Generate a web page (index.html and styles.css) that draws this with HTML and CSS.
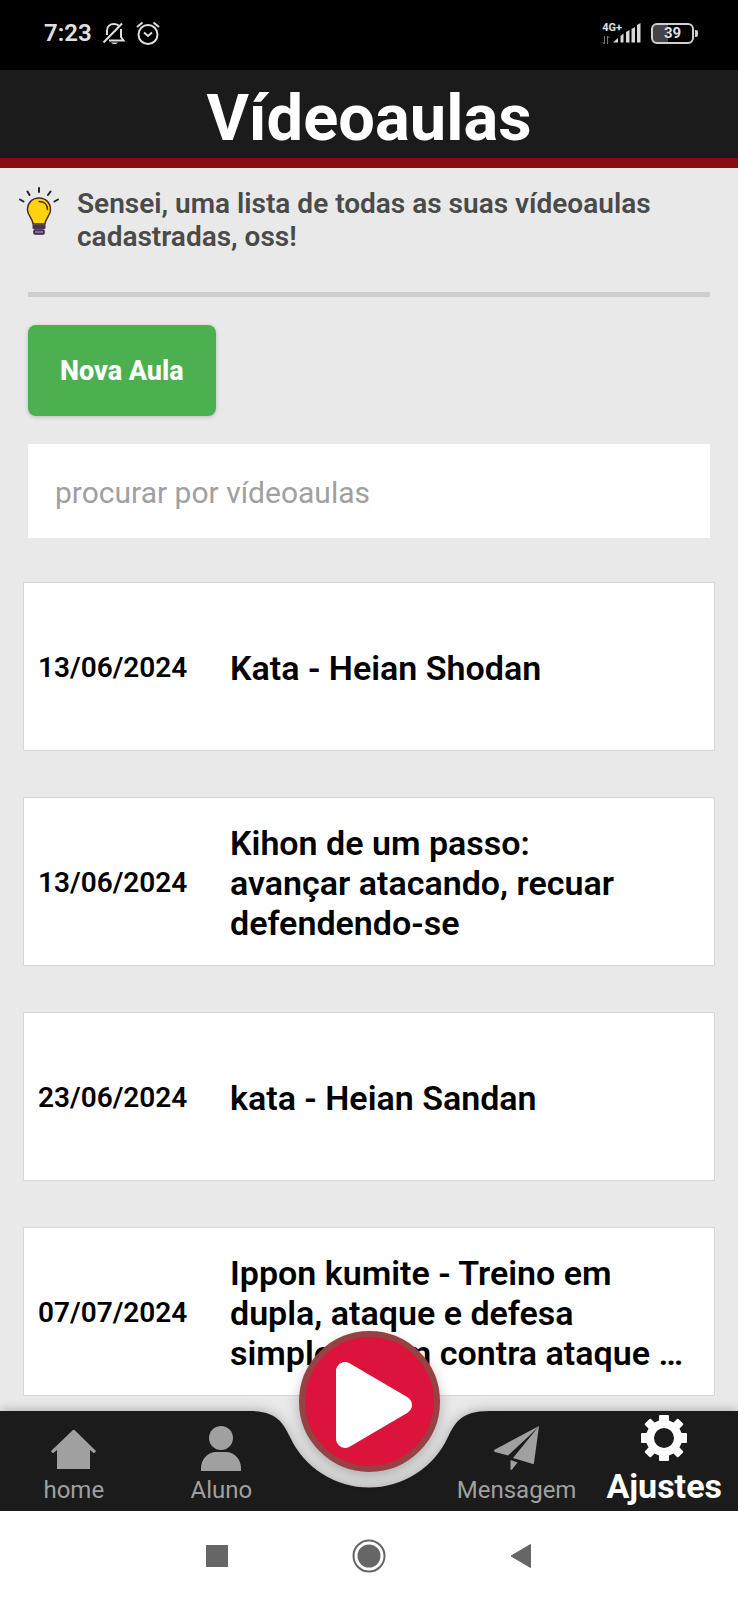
FILE: index.html
```html
<!DOCTYPE html>
<html lang="pt-BR">
<head>
<meta charset="utf-8">
<meta name="viewport" content="width=device-width, initial-scale=1">
<title>Vídeoaulas</title>
<link rel="stylesheet" href="styles.css">
</head>
<body>
<div class="screen">
  <div class="status">
    <span class="status-time">7:23</span>
    <svg class="status-icon" viewBox="0 0 24 24" width="24" height="24" fill="none" stroke="currentColor" stroke-width="2">
      <path d="M5 14V9.500C5 5.500 8 3 12 3c1.800 0 3.300.5 4.500 1.500M19 8v8l2.500 3.500H7M1.500 21.500L20 2.500"/>
      <path d="M9 21.500h7l-2 1.500h-3z" fill="currentColor" stroke="none"/>
    </svg>
    <svg class="status-icon" viewBox="0 0 24 24" width="24" height="24" fill="none" stroke="currentColor" stroke-width="2">
      <circle cx="12" cy="13.500" r="9.500"/>
      <path d="M8 11.500l4 3.500 4-3.500M1 6l5.500-4.500M23 6l-5.500-4.500"/>
    </svg>
    <span class="status-gap"></span>
    <span class="network">
      <span class="network-type">4G+</span>
      <svg viewBox="0 0 8 10" width="8" height="10" fill="none" stroke="#777"><path d="M2.500 1v8L.5 7M5.500 9V1l2 2"/></svg>
    </span>
    <svg class="bars" viewBox="0 0 28 20" width="28" height="20" fill="#d8d8d8">
      <path d="M0 19.500L5 15v4.500zM7.500 13l3-2.500v9h-3zM13 9l3.500-2v12.500H13zM18.500 6L22 4v15.500h-3.500zM24 2l3.500-2v19.500H24z"/>
    </svg>
    <span class="battery"><span class="battery-level">39</span></span>
  </div>

  <header class="header"><h1 class="header-title">Vídeoaulas</h1></header>

  <main class="content">
    <div class="tip">
      <svg class="tip-icon" viewBox="0 0 40 50" width="40" height="50">
        <g stroke="#2b2138" stroke-width="2" stroke-linecap="round" fill="none">
          <path d="M20 1v4M8.500 4.500l2 3.500M31.500 4.500l-2.500 3.500M1 12.500l3.500 2M39 12.500L35.500 14.500"/>
        </g>
        <path d="M20 11C13 11 8.500 16 8.500 23c0 5.500 5 8 5.500 14h12c.5-6 5.500-8.500 5.500-14C31.500 16 27 11 20 11z" fill="#ffd20f" stroke="#4b2b2b" stroke-width="1.500"/>
        <path d="M20 14.500c5 0 8.500 3 8.500 8" fill="none" stroke="#4b2b1b" stroke-width="1.500" stroke-linecap="round"/>
        <rect x="13.500" y="37.500" width="13" height="4.500" rx="1" fill="#4a3350"/>
        <rect x="15" y="43" width="10" height="4" rx="1" fill="#8a6b95" stroke="#33213c" stroke-width="1.500"/>
      </svg>
      <p class="tip-text">Sensei, uma lista de todas as suas vídeoaulas cadastradas, oss!</p>
    </div>
    <hr class="divider">
    <button class="new-button" type="button">Nova Aula</button>
    <input class="search" type="search" placeholder="procurar por vídeoaulas" aria-label="procurar por vídeoaulas">

    <ul class="lessons">
      <li class="lesson"><time class="lesson-date" datetime="2024-06-13">13/06/2024</time><span class="lesson-title">Kata - Heian Shodan</span></li>
      <li class="lesson"><time class="lesson-date" datetime="2024-06-13">13/06/2024</time><span class="lesson-title">Kihon de um passo:<br>avançar atacando, recuar defendendo-se</span></li>
      <li class="lesson"><time class="lesson-date" datetime="2024-06-23">23/06/2024</time><span class="lesson-title">kata - Heian Sandan</span></li>
      <li class="lesson"><time class="lesson-date" datetime="2024-07-07">07/07/2024</time><span class="lesson-title">Ippon kumite - Treino em dupla, ataque e defesa simples, sem contra ataque …</span></li>
    </ul>
  </main>

  <nav class="tabs">
    <div class="tabs-shape">
      <span class="tabs-side"></span>
      <svg class="tabs-notch" viewBox="0 0 240 100" width="240" height="100"><path d="M0 0C28 0 34 12 41 26A87 87 0 0 0 199 26C206 12 212 0 240 0V100H0z" fill="#1b1b1b"/></svg>
      <span class="tabs-side"></span>
    </div>
    <a class="tab" href="#home">
      <svg viewBox="0 0 46 46" width="46" height="46" fill="currentColor"><path d="M22 5L0 26q.5 2 2.500 2L6 25v19h33V25l3.500 3q2 0 2.500-2L23.500 5q-.8-.7-1.500 0z"/></svg>
      <span class="tab-label">home</span>
    </a>
    <a class="tab" href="#aluno">
      <svg viewBox="0 0 46 46" width="46" height="46" fill="currentColor"><circle cx="23" cy="13" r="12"/><path d="M3 46v-3c0-9 7-16 15-16h10c8 0 15 7 15 16v3z"/></svg>
      <span class="tab-label">Aluno</span>
    </a>
    <span class="tab-space"></span>
    <a class="tab" href="#mensagem">
      <svg viewBox="0 0 46 46" width="46" height="46" fill="currentColor"><path d="M45 1L0 25q0 1.500 1 2l13 3.500L35 11zM45 1L19 33l20 6q1 0 1-1zM16.500 35l7 2.500L18 44.500q-1.500 1-1.500-.5z"/></svg>
      <span class="tab-label">Mensagem</span>
    </a>
    <a class="tab tab-active" href="#ajustes" aria-current="page">
      <svg viewBox="0 0 46 46" width="46" height="46" fill="currentColor" fill-rule="evenodd"><path d="M19 0h8q1 0 1 1v4.500l4.500 2L36 4q.8-.7 1.500 0L42 8.500q.7.8 0 1.500l-3.500 3.500 2 4.500H45q1 0 1 1v8q0 1-1 1h-4.500l-2 4.500L42 36q.7.8 0 1.500L37.500 42q-.8.7-1.500 0l-3.500-3.500-4.500 2V45q0 1-1 1h-8q-1 0-1-1v-4.500l-4.500-2L10 42q-.8.7-1.500 0L4 37.500q-.7-.8 0-1.500l3.500-3.500-2-4.500H1q-1 0-1-1v-8q0-1 1-1h4.500l2-4.500L4 10q-.7-.8 0-1.500L8.500 4q.8-.7 1.500 0l3.500 3.500 4.500-2V1q0-1 1-1zM23 13a10 10 0 1 0 0 20a10 10 0 1 0 0-20z"/></svg>
      <span class="tab-label">Ajustes</span>
    </a>
    <button class="play" type="button" aria-label="Reproduzir">
      <svg viewBox="0 0 78 88" width="78" height="88"><path d="M10 10v68L68 44z" fill="#fff" stroke="#fff" stroke-width="18" stroke-linejoin="round"/></svg>
    </button>
  </nav>

  <div class="system">
    <svg viewBox="0 0 22 22" width="22" height="22"><path d="M0 0h22v22H0z" fill="#666"/></svg>
    <svg viewBox="0 0 34 34" width="34" height="34"><circle cx="17" cy="17" r="15.500" fill="none" stroke="#666" stroke-width="2"/><circle cx="17" cy="17" r="11.500" fill="#666"/></svg>
    <svg viewBox="0 0 22 26" width="22" height="26"><path d="M1 13L20.500 1.500v23z" fill="#666" stroke="#666" stroke-linejoin="round"/></svg>
  </div>
</div>
</body>
</html>
```
FILE: styles.css
```css
* { box-sizing: border-box; }

body {
  margin: 0;
  font-family: Roboto, "Noto Sans", sans-serif;
  background: #e9e9e9;
}

.screen {
  display: flex;
  flex-direction: column;
  height: 100vh;
  overflow: hidden;
}

/* Status bar */
.status {
  flex: none;
  display: flex;
  align-items: center;
  gap: 10px;
  height: 70px;
  padding: 0 40px 4px 44px;
  background: #000;
  color: #e0e0e0;
}
.status-time { font-size: 24px; font-weight: 600; }
.status-gap { flex: 1; }
.network {
  display: flex;
  flex-direction: column;
  gap: 2px;
  margin-right: -19px;
}
.network-type { font-size: 11px; font-weight: 700; line-height: 11px; }
.battery {
  position: relative;
  display: flex;
  align-items: center;
  justify-content: center;
  width: 43px;
  height: 21px;
  margin-right: 4px;
  border: 2px solid #d0d0d0;
  border-radius: 6px;
  background: linear-gradient(90deg, #444 39%, #000 39%);
}
.battery::after {
  content: "";
  position: absolute;
  right: -6px;
  top: 5px;
  width: 3px;
  height: 7px;
  border-radius: 0 2px 2px 0;
  background: #d0d0d0;
}
.battery-level { font-size: 15px; font-weight: 700; line-height: 16px; }

/* Header */
.header {
  flex: none;
  padding-top: 8px;
  background: #1b1b1b;
  border-bottom: 10px solid #850c10;
}
.header-title {
  margin: 0;
  color: #fff;
  font-size: 65px;
  font-weight: 700;
  line-height: 80px;
  text-align: center;
}

/* Content */
.content {
  flex: 1;
  min-height: 0;
  display: flex;
  flex-direction: column;
  padding: 0 28px;
}
.tip {
  display: flex;
  align-items: flex-start;
  gap: 18px;
  margin: 19px 0 39px -9px;
}
.tip-icon { flex: none; }
.tip-text {
  margin: 0;
  color: #4a4a4a;
  font-size: 28px;
  font-weight: 600;
  line-height: 33px;
}
.divider {
  flex: none;
  width: 100%;
  height: 5px;
  margin: 0 0 28px;
  border: 0;
  background: #cecece;
}
.new-button {
  flex: none;
  align-self: flex-start;
  height: 91px;
  padding: 0 32px;
  border: 0;
  border-radius: 8px;
  background: #4caf50;
  box-shadow: 0 1px 4px rgba(0, 0, 0, 0.2);
  color: #fff;
  font: 800 27px Roboto, sans-serif;
}
.search {
  flex: none;
  width: 100%;
  height: 94px;
  margin: 28px 0 44px;
  padding: 2px 27px 0;
  border: 0;
  background: #fff;
  font: 400 30px Roboto, sans-serif;
}
.search::placeholder { color: #a0a0a0; opacity: 1; }

.lessons {
  display: flex;
  flex-direction: column;
  gap: 46px;
  margin: 0 -5px;
  padding: 0;
  list-style: none;
}
.lesson {
  flex: none;
  display: flex;
  align-items: center;
  height: 169px;
  padding: 2px 16px 0 14px;
  border: 1px solid #d6d6d6;
  background: #fff;
  color: #000;
}
.lesson-date { flex: none; width: 192px; font-size: 28px; font-weight: 600; }
.lesson-title { flex: 1; font-size: 34px; font-weight: 600; line-height: 40px; }

/* Bottom tabs */
.tabs {
  flex: none;
  position: relative;
  display: grid;
  grid-template-columns: repeat(5, 1fr);
  height: 100px;
}
.tabs-shape {
  position: absolute;
  inset: 0;
  display: flex;
  filter: drop-shadow(0 0 6px rgba(0, 0, 0, 0.3));
}
.tabs-side { flex: 1; background: #1b1b1b; }
.tab {
  position: relative;
  display: flex;
  flex-direction: column;
  align-items: center;
  justify-content: flex-end;
  gap: 4px;
  padding-bottom: 6px;
  color: #a0a0a0;
  font-size: 24px;
  line-height: 30px;
  text-decoration: none;
}
.tab-active {
  padding-bottom: 4px;
  color: #fff;
  font-size: 34px;
  font-weight: 700;
  line-height: 42px;
}
.play {
  position: absolute;
  left: 50%;
  top: -80px;
  display: flex;
  align-items: center;
  justify-content: center;
  width: 141px;
  height: 141px;
  margin-left: -70px;
  padding: 6px 0 0 8px;
  border: 6px solid #964244;
  border-radius: 50%;
  background: #dc143c;
  box-shadow: 0 6px 14px rgba(0, 0, 0, 0.25);
}

/* System navigation */
.system {
  flex: none;
  position: relative;
  display: flex;
  align-items: center;
  justify-content: center;
  gap: 124px;
  height: 89px;
  background: #fff;
}
```
